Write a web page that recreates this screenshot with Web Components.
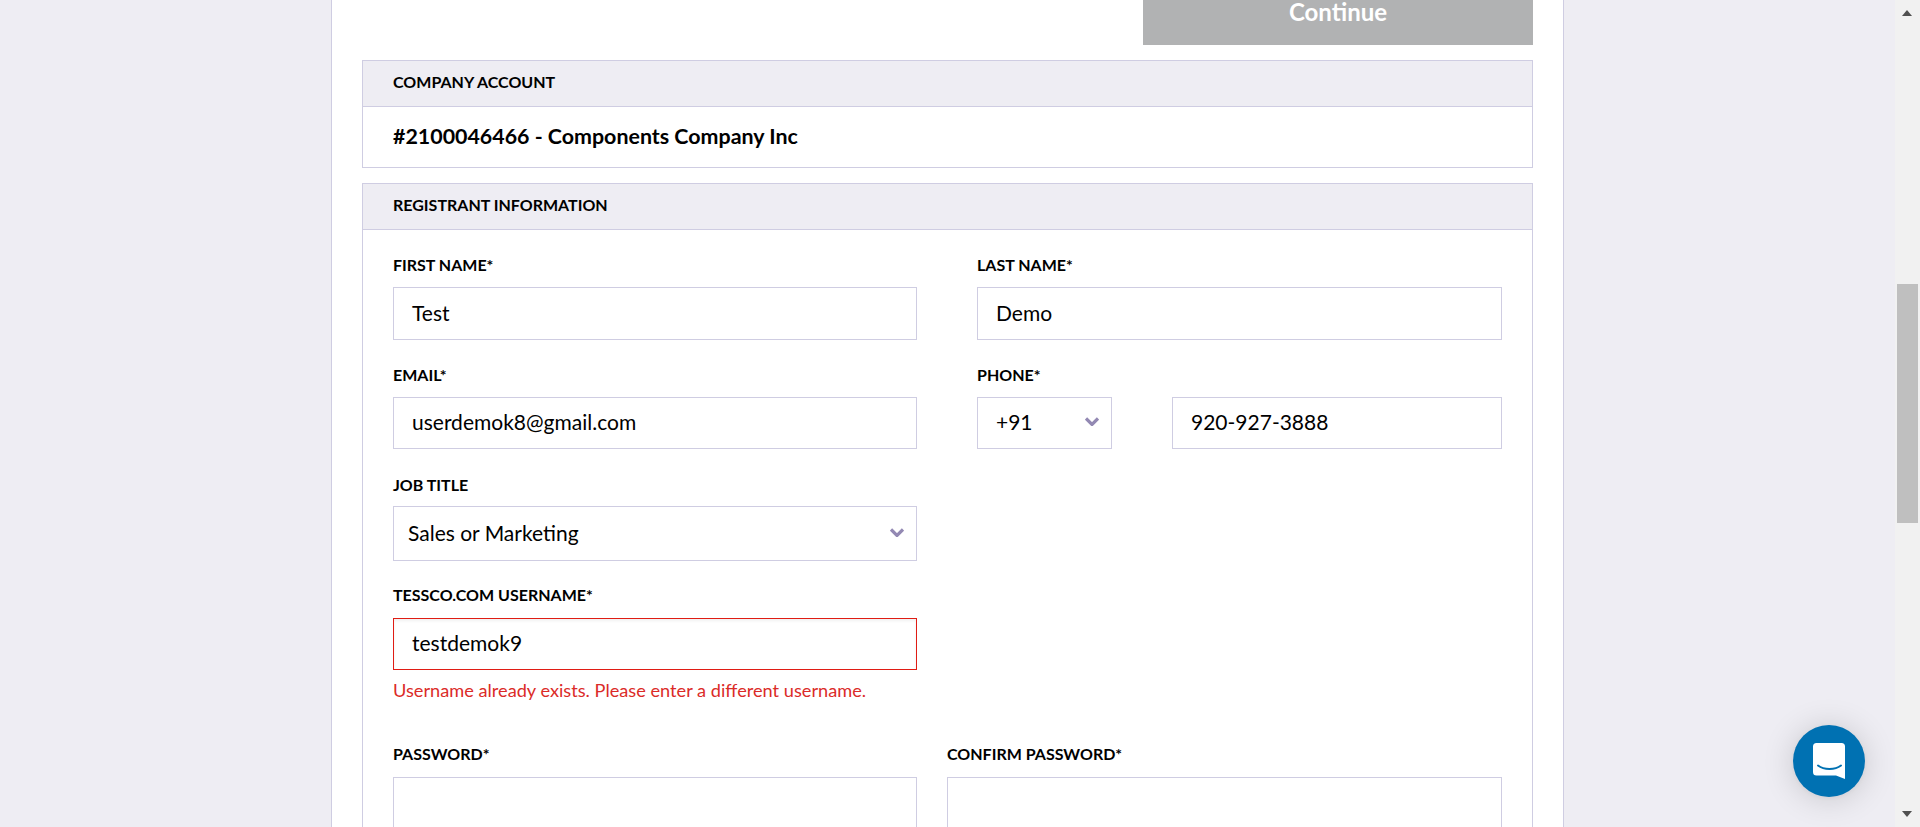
<!DOCTYPE html>
<html>
<head>
<meta charset="utf-8">
<style>
  html, body { margin: 0; height: 100%; overflow: hidden; }
  body { font-family: Lato, "Liberation Sans", sans-serif; color: #000; }

  form-section { margin-top: 15px; }

  form-row { margin-bottom: 26px; }
  form-row.names { margin-bottom: 25px; --control-height: 53px; }
  form-row.job { margin-bottom: 24px; --label-gap: 11px; --control-height: 55px; }
  form-row.user { margin-bottom: 0; --label-gap: 13px; }
  form-row.pass { margin-top: 44px; --label-gap: 13px; --col-gap: 30px; --right-grow: 555px; }
</style>
</head>
<body>

<template id="tpl-app-shell">
  <style>
    :host { display: flex; height: 827px; background: #eeedf3; }
    main { flex: 1; display: flex; justify-content: center; min-width: 0; }
  </style>
  <main><slot></slot></main>
  <slot name="scrollbar"></slot>
</template>

<template id="tpl-form-panel">
  <style>
    :host {
      display: block;
      box-sizing: border-box;
      width: 1233px;
      height: 827px;
      padding: 0 30px;
      overflow: hidden;
      background: #fff;
      border-left: 1px solid #cfcde2;
      border-right: 1px solid #cfcde2;
    }
  </style>
  <slot></slot>
</template>

<template id="tpl-continue-button">
  <style>
    :host { display: flex; justify-content: flex-end; }
    button {
      width: 390px;
      height: 45px;
      padding: 0 0 21px;
      border: 0;
      background: #b1b2b3;
      color: #fff;
      font: 700 24px/24px Lato, "Liberation Sans", sans-serif;
    }
  </style>
  <button type="button"><slot></slot></button>
</template>

<template id="tpl-form-section">
  <style>
    :host {
      display: block;
      border: 1px solid #cfcde2;
      background: #fff;
    }
    header {
      box-sizing: border-box;
      height: 46px;
      padding: 0 30px 4px;
      display: flex;
      align-items: center;
      background: #eeedf3;
      border-bottom: 1px solid #cfcde2;
      font-size: 16px;
      font-weight: 700;
      text-transform: uppercase;
    }
  </style>
  <header></header>
  <slot></slot>
</template>

<template id="tpl-form-row">
  <style>
    :host {
      display: grid;
      grid-template-columns: 524px var(--right-grow, 525px);
      column-gap: var(--col-gap, 60px);
    }
  </style>
  <slot></slot>
</template>

<template id="tpl-form-field">
  <style>
    :host { display: block; min-width: 0; }
    label {
      display: block;
      height: 20px;
      margin-bottom: var(--label-gap, 12px);
      font-size: 16px;
      line-height: 19px;
      font-weight: 700;
      text-transform: uppercase;
    }
    .controls { display: flex; column-gap: 60px; }
  </style>
  <label></label>
  <div class="controls"><slot></slot></div>
  <slot name="message"></slot>
</template>

<template id="tpl-text-box">
  <style>
    :host {
      display: flex;
      flex: 1;
      align-items: center;
      box-sizing: border-box;
      height: var(--control-height, 52px);
      padding: 0 18px 3px;
      border: 1px solid #cfcde2;
      background: #fff;
      font-size: 21px;
    }
    :host([invalid]) {
      border-color: #e01c14;
      box-shadow: inset 0 2px 3px rgba(0,0,0,.06);
    }
  </style>
  <slot></slot>
</template>

<template id="tpl-select-box">
  <style>
    :host {
      display: flex;
      flex: 1;
      align-items: center;
      justify-content: space-between;
      box-sizing: border-box;
      height: var(--control-height, 52px);
      padding: 0 12px 3px 14px;
      border: 1px solid #cfcde2;
      background: #fff;
      font-size: 21px;
    }
    :host([narrow]) { flex: 0 0 135px; padding-left: 18px; }
    svg { display: block; width: 14px; height: 10px; margin-bottom: 1px; }
  </style>
  <slot></slot>
  <svg viewBox="0 0 14 10"><path d="M1 2.5 7 8.5 13 2.5" fill="none" stroke="#9389b3" stroke-width="3.2"/></svg>
</template>

<template id="tpl-error-text">
  <style>
    :host {
      display: block;
      margin-top: 10px;
      color: #db2b28;
      font-size: 18.200px;
      line-height: 20px;
    }
  </style>
  <slot></slot>
</template>

<template id="tpl-fake-scrollbar">
  <style>
    :host {
      display: block;
      flex: 0 0 25px;
      position: relative;
      background: #f1f1f1;
    }
    .up, .down {
      position: absolute;
      left: 7px;
      width: 0;
      height: 0;
      border-left: 5.5px solid transparent;
      border-right: 5.5px solid transparent;
    }
    .up { top: 10px; border-bottom: 6px solid #505050; }
    .down { bottom: 10px; border-top: 6px solid #505050; }
    .thumb {
      position: absolute;
      top: 284px;
      left: 2px;
      width: 21px;
      height: 239px;
      background: #bfbfbf;
    }
  </style>
  <div class="up"></div>
  <div class="thumb"></div>
  <div class="down"></div>
</template>

<template id="tpl-chat-launcher">
  <style>
    :host {
      position: fixed;
      left: 1793px;
      top: 725px;
      width: 72px;
      height: 72px;
      display: flex;
      align-items: center;
      justify-content: center;
      border-radius: 50%;
      background: #0071b2;
      box-shadow: 0 1px 6px rgba(0,0,0,.06), 0 2px 32px rgba(0,0,0,.16);
    }
    svg { display: block; width: 32px; height: 36px; }
  </style>
  <svg viewBox="0 0 32 36">
    <path d="M3.5 0h25A3.5 3.5 0 0 1 32 3.500V36l-9-3.500H3.500A3.500 3.500 0 0 1 0 29V3.500A3.500 3.500 0 0 1 3.500 0z" fill="#fff"/>
    <path d="M5 22.500c6 4.600 17 4.600 23 0" fill="none" stroke="#0071b2" stroke-width="2" stroke-linecap="round"/>
  </svg>
</template>

<app-shell>
  <form-panel>
    <continue-button>Continue</continue-button>

    <form-section title="Company Account">
      <account-line>#2100046466 - Components Company Inc</account-line>
    </form-section>

    <form-section title="Registrant Information">
      <section-body>
        <form-row class="names">
          <form-field label="First Name" required><text-box>Test</text-box></form-field>
          <form-field label="Last Name" required><text-box>Demo</text-box></form-field>
        </form-row>
        <form-row>
          <form-field label="Email" required><text-box>userdemok8@gmail.com</text-box></form-field>
          <form-field label="Phone" required>
            <select-box narrow>+91</select-box>
            <text-box>920-927-3888</text-box>
          </form-field>
        </form-row>
        <form-row class="job">
          <form-field label="Job Title"><select-box>Sales or Marketing</select-box></form-field>
        </form-row>
        <form-row class="user">
          <form-field label="Tessco.com Username" required>
            <text-box invalid>testdemok9</text-box>
            <error-text slot="message">Username already exists. Please enter a different username.</error-text>
          </form-field>
        </form-row>
        <form-row class="pass">
          <form-field label="Password" required><text-box></text-box></form-field>
          <form-field label="Confirm Password" required><text-box></text-box></form-field>
        </form-row>
      </section-body>
    </form-section>
  </form-panel>
  <fake-scrollbar slot="scrollbar"></fake-scrollbar>
</app-shell>
<chat-launcher></chat-launcher>

<script>
  function plainElement(name, id) {
    customElements.define(name, class extends HTMLElement {
      constructor() {
        super();
        this.attachShadow({ mode: 'open' });
        this.shadowRoot.appendChild(document.getElementById(id).content.cloneNode(true));
      }
    });
  }

  plainElement('app-shell', 'tpl-app-shell');
  plainElement('form-panel', 'tpl-form-panel');
  plainElement('continue-button', 'tpl-continue-button');
  plainElement('form-row', 'tpl-form-row');
  plainElement('text-box', 'tpl-text-box');
  plainElement('select-box', 'tpl-select-box');
  plainElement('error-text', 'tpl-error-text');
  plainElement('fake-scrollbar', 'tpl-fake-scrollbar');
  plainElement('chat-launcher', 'tpl-chat-launcher');

  class FormSection extends HTMLElement {
    constructor() {
      super();
      this.attachShadow({ mode: 'open' });
      this.shadowRoot.appendChild(document.getElementById('tpl-form-section').content.cloneNode(true));
      this.shadowRoot.querySelector('header').textContent = this.getAttribute('title');
    }
  }
  customElements.define('form-section', FormSection);

  class FormField extends HTMLElement {
    constructor() {
      super();
      this.attachShadow({ mode: 'open' });
      this.shadowRoot.appendChild(document.getElementById('tpl-form-field').content.cloneNode(true));
      const star = this.hasAttribute('required') ? '*' : '';
      this.shadowRoot.querySelector('label').textContent = this.getAttribute('label') + star;
    }
  }
  customElements.define('form-field', FormField);

  class AccountLine extends HTMLElement {
    constructor() {
      super();
      this.attachShadow({ mode: 'open' }).innerHTML = `
        <style>
          :host {
            display: flex;
            align-items: center;
            box-sizing: border-box;
            height: 60px;
            padding: 0 30px 3px;
            font-size: 21.400px;
            font-weight: 700;
          }
        </style>
        <slot></slot>`;
    }
  }
  customElements.define('account-line', AccountLine);

  class SectionBody extends HTMLElement {
    constructor() {
      super();
      this.attachShadow({ mode: 'open' }).innerHTML = `
        <style>
          :host { display: block; padding: 25px 30px 0; }
        </style>
        <slot></slot>`;
    }
  }
  customElements.define('section-body', SectionBody);
</script>
</body>
</html>
